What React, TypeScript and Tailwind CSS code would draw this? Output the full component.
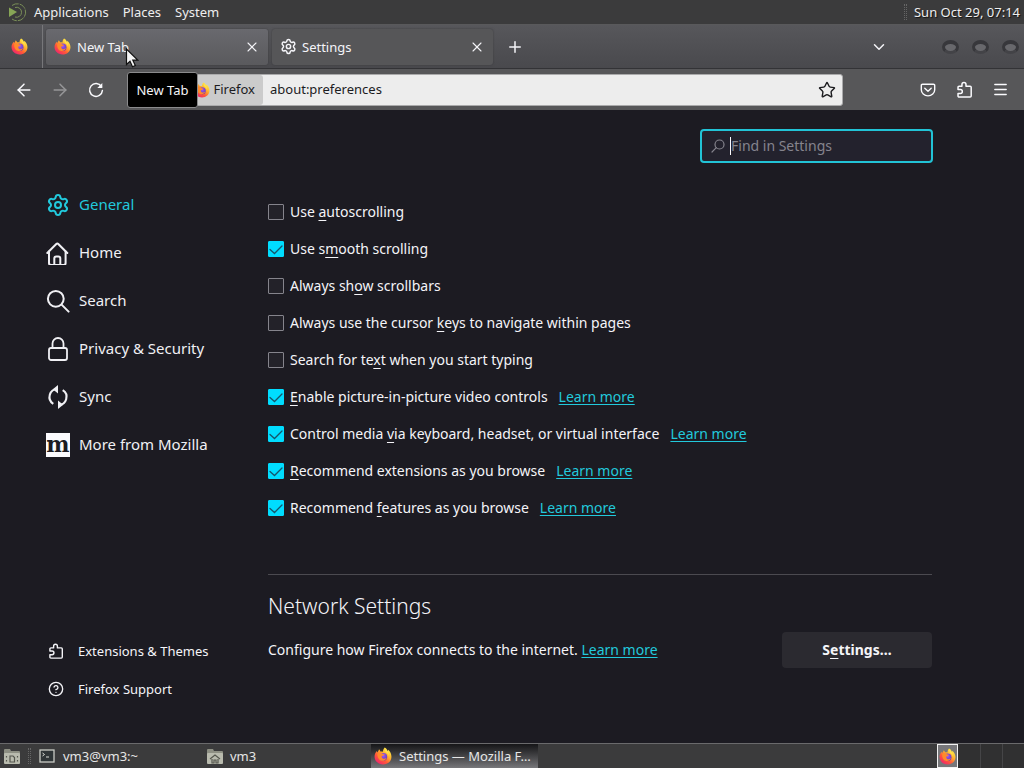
import { useState } from "react";
import type { ReactNode } from "react";
import {
  ArrowLeft,
  ArrowRight,
  ChevronDown,
  CircleHelp,
  Menu,
  Plus,
  Settings as Gear,
  Star,
  X,
} from "lucide-react";

function FirefoxLogo({ className, id }: { className: string; id: string }) {
  return (
    <svg viewBox="0 0 32 32" className={className} aria-hidden="true">
      <defs>
        <linearGradient id={id + "-body"} x1="0.85" y1="0.1" x2="0.2" y2="0.95">
          <stop offset="0" stopColor="#fff14a" />
          <stop offset="0.35" stopColor="#ffb02e" />
          <stop offset="0.65" stopColor="#ff5a36" />
          <stop offset="1" stopColor="#f0246e" />
        </linearGradient>
        <radialGradient id={id + "-core"} cx="0.5" cy="0.35" r="0.7">
          <stop offset="0" stopColor="#a05cf0" />
          <stop offset="1" stopColor="#5a33b8" />
        </radialGradient>
      </defs>
      <path
        fill={"url(#" + id + "-body)"}
        d="M19 1c3.500 2 4.500 4 5 6 1-.4 1.300-1 1.300-2 3.500 3.200 5.700 7.500 5.700 12.200C31 25.400 24.300 31 16 31S1 25 1 17c0-4 1.500-7.300 4-10 .2 1.200.5 2 1 2.600C7.500 7.500 8.500 5.500 9 4c1.300 1.200 2 2.700 2.300 4.200 1.700-.4 3.500-.2 4.700.4C16 5.500 17 3 19 1z"
      />
      <circle cx="16.500" cy="17.500" r="7" fill={"url(#" + id + "-core)"} />
      <path
        fill="#ff8a2b"
        d="M6 12c3-2.500 6.500-2.500 9-.2 1 .9 2.500 1 4 1-1 2.400-3.500 2.600-4.800 3.400-1.200.8-.7 3.300 1.300 4.300 2.500 1.200 5 .2 7-1.500-1.500 4.500-6 6.500-10.500 5C8 22.500 5.500 17 6 12z"
      />
      <path fill="#ffe14d" d="M20 3c3 4 7 6.500 6.500 14-.5-3.500-2.500-6-5-7.500C19.500 8 19 5.500 20 3z" />
    </svg>
  );
}

function PuzzleIcon({ className }: { className: string }) {
  return (
    <svg viewBox="0 0 16 16" className={className} fill="none" stroke="currentColor" strokeWidth="1.4" strokeLinejoin="round" aria-hidden="true">
      <path d="M1.900 8V5.900a1 1 0 0 1 1-1h2.700V3.200a1.900 1.900 0 0 1 3.800 0v1.700h3.900a1 1 0 0 1 1 1v8.200a1 1 0 0 1-1 1H2.900a1 1 0 0 1-1-1v-2.400h2.200a1.700 1.700 0 0 0 0-3.700z" />
    </svg>
  );
}

function PocketIcon() {
  return (
    <svg viewBox="0 0 16 16" className="size-4" fill="none" stroke="currentColor" strokeWidth="1.400" strokeLinecap="round" strokeLinejoin="round" aria-hidden="true">
      <path d="M2.500 2.200h11a1.200 1.200 0 0 1 1.200 1.200v4.300a6.700 6.200 0 0 1-13.400 0V3.400a1.200 1.200 0 0 1 1.200-1.200z" />
      <path d="M4.800 6.300 8 9.300l3.200-3" />
    </svg>
  );
}

function ReloadIcon() {
  return (
    <svg viewBox="0 0 16 16" className="size-4" fill="none" stroke="currentColor" strokeWidth="1.500" strokeLinecap="round" aria-hidden="true">
      <path d="M13.400 4.500A6.400 6.400 0 1 0 14.400 8.500" />
      <path d="M14.300 1v5H9.300z" fill="currentColor" stroke="none" />
    </svg>
  );
}

function HomeIcon() {
  return (
    <svg viewBox="0 0 24 24" className="size-6" fill="none" stroke="currentColor" strokeWidth="2" strokeLinecap="round" strokeLinejoin="round" aria-hidden="true">
      <path d="M1.300 12 10.300 3a1.400 1.400 0 0 1 2 0L21.300 12" />
      <path d="M3 10.500V22a2 2 0 0 0 2 2h12.600a2 2 0 0 0 2-2V10.500" />
      <path d="M8.300 24v-6.500a2 2 0 0 1 2-2h2a2 2 0 0 1 2 2V24" />
    </svg>
  );
}

function SearchIcon() {
  return (
    <svg viewBox="0 0 24 24" className="size-6" fill="none" stroke="currentColor" strokeWidth="2" strokeLinecap="round" aria-hidden="true">
      <circle cx="9.800" cy="9.800" r="7.900" />
      <path d="m15.600 15.600 7 7" />
    </svg>
  );
}

function LockIcon() {
  return (
    <svg viewBox="0 0 24 24" className="size-6" fill="none" stroke="currentColor" strokeWidth="1.800" aria-hidden="true">
      <rect x="3" y="11" width="18" height="12" rx="2" />
      <path d="M6.500 11V6.500a5.500 5.500 0 0 1 11 0V11" />
    </svg>
  );
}

function SyncIcon() {
  return (
    <svg viewBox="0 0 24 24" className="size-6" fill="none" stroke="currentColor" strokeWidth="2.100" aria-hidden="true">
      <path d="M7.300 18.800A8 8 0 0 1 11.500 4" />
      <path d="M16.700 5.200A8 8 0 0 1 12.500 20" />
      <path d="M12 0v8.400L6.800 4.200zM12 15.600V24l5.200-4.200z" fill="currentColor" stroke="none" />
    </svg>
  );
}

function FindIcon() {
  return (
    <svg viewBox="0 0 16 16" className="size-4" fill="none" stroke="currentColor" strokeWidth="1.200" strokeLinecap="round" aria-hidden="true">
      <circle cx="9.500" cy="6.500" r="4.500" />
      <path d="M6.300 9.700 2 14" />
    </svg>
  );
}

function FolderIcon({ home }: { home: boolean }) {
  return (
    <svg viewBox="0 0 18 18" className="size-[18px]" aria-hidden="true">
      <path d="M1 3a1 1 0 0 1 1-1h5l1 2h8a1 1 0 0 1 1 1v3H1z" fill="#8d8f83" />
      <rect x="1" y="6" width="16" height="11" rx="1" fill="#b9bbae" />
      {home ? (
        <path d="m4 12 5-4 5 4M6 12v4h2v-3h2v3h2v-4" fill="none" stroke="#55574e" strokeWidth="1.200" />
      ) : (
        <path d="M7 9h3l1.500 1.500V15H7zM3.500 9v1.500M3.500 13v1.500M14.500 9v1.500M14.500 13v1.500" fill="none" stroke="#55574e" strokeWidth="1.200" />
      )}
    </svg>
  );
}

function TerminalIcon() {
  return (
    <svg viewBox="0 0 16 14" className="h-[14px] w-4" aria-hidden="true">
      <rect x="1" y="1" width="14" height="12" fill="#2e3436" stroke="#c9cbc5" strokeWidth="1.300" />
      <path d="m3.500 4 2 1.500-2 1.500M7 8h3" fill="none" stroke="#d8dad4" />
    </svg>
  );
}

function MateLogo() {
  return (
    <svg viewBox="0 0 20 20" className="size-5" fill="none" aria-hidden="true">
      <path d="M2 5.500 10 10l-8 5z" fill="#87a556" />
      <path d="M5 3.500A8.500 8.500 0 1 1 5 17" stroke="#7a8f58" strokeDasharray="7 1" />
      <path d="M8 5.500a5 5 0 1 1 0 9.500" stroke="#7a8f58" />
    </svg>
  );
}

function AccessText({ before, letter, after }: { before: string; letter: string; after: string }) {
  return (
    <>
      {before}
      <span className="underline decoration-1 underline-offset-3">{letter}</span>
      {after}
    </>
  );
}

const options = [
  { id: "autoscroll", before: "Use ", letter: "a", after: "utoscrolling", on: false, more: false },
  { id: "smooth", before: "Use s", letter: "m", after: "ooth scrolling", on: true, more: false },
  { id: "scrollbars", before: "Always sh", letter: "o", after: "w scrollbars", on: false, more: false },
  { id: "cursor", before: "Always use the cursor ", letter: "k", after: "eys to navigate within pages", on: false, more: false },
  { id: "typing", before: "Search for te", letter: "x", after: "t when you start typing", on: false, more: false },
  { id: "pip", before: "", letter: "E", after: "nable picture-in-picture video controls", on: true, more: true },
  { id: "media", before: "Control media ", letter: "v", after: "ia keyboard, headset, or virtual interface", on: true, more: true },
  { id: "extensions", before: "", letter: "R", after: "ecommend extensions as you browse", on: true, more: true },
  { id: "features", before: "Recommend ", letter: "f", after: "eatures as you browse", on: true, more: true },
];

function LearnMore() {
  return (
    <a href="#learn-more" className="text-[#22c9dc] underline decoration-1 underline-offset-2">
      Learn more
    </a>
  );
}

function Option({ option }: { option: (typeof options)[number] }) {
  const [on, setOn] = useState(option.on);
  return (
    <div className="flex h-[37px] items-center gap-[11px]">
      <div className="flex items-center gap-[6px]">
        <span className="grid size-4">
          <input
            id={option.id}
            type="checkbox"
            checked={on}
            onChange={(e) => setOn(e.target.checked)}
            className="peer col-start-1 row-start-1 size-4 appearance-none rounded-[1px] border border-[#85848c] bg-[#232229] checked:border-[#00ddff] checked:bg-[#00ddff]"
          />
          <svg viewBox="0 0 16 16" className="pointer-events-none col-start-1 row-start-1 size-4 opacity-0 peer-checked:opacity-100" fill="none" stroke="#15556b" strokeWidth="1.300" strokeLinecap="round" aria-hidden="true">
            <path d="m2 8.500 4.500 4L14 5" />
          </svg>
        </span>
        <label htmlFor={option.id}>
          <AccessText before={option.before} letter={option.letter} after={option.after} />
        </label>
      </div>
      {option.more && <LearnMore />}
    </div>
  );
}

function NavItem({ icon, label, active = false }: { icon: ReactNode; label: string; active?: boolean }) {
  return (
    <a href={"#" + label.toLowerCase().split(" ")[0]} className={"flex h-12 items-center gap-[9px] text-[15px] " + (active ? "text-[#22c9dc]" : "text-[#f0f0f4]")}>
      {icon}
      {label}
    </a>
  );
}

function ToolButton({ label, children, dim = false }: { label: string; children: ReactNode; dim?: boolean }) {
  return (
    <button type="button" aria-label={label} disabled={dim} className={"flex h-8 w-9 items-center justify-center " + (dim ? "text-[#969698]" : "text-[#fbfbfe]")}>
      {children}
    </button>
  );
}

function WindowButton({ label }: { label: string }) {
  return (
    <button type="button" aria-label={label} className="h-[14px] w-[17px] rounded-[50%] border-[3px] border-t-4 border-[#37373b] border-b-[#434347] bg-[#68686c]" />
  );
}

export default function App() {
  return (
    <div className="relative flex min-h-screen flex-col bg-[#1c1b22] font-['Noto_Sans',sans-serif] text-sm text-[#f4f4f8]">
      <header className="flex h-6 items-center bg-[#3b3b3c] pr-1 pl-[7px] text-[13px] text-[#eeeeee] [text-shadow:1px_1px_1px_#111]">
        <MateLogo />
        <nav className="flex gap-[14px] pl-[7px]">
          <button type="button">Applications</button>
          <button type="button">Places</button>
          <button type="button">System</button>
        </nav>
        <div className="ml-auto flex items-center gap-[7px]">
          <span className="h-4 w-[3px] border-x border-dotted border-[#666]" />
          <time>Sun Oct 29, 07:14</time>
        </div>
      </header>

      <div className="flex h-[45px] items-center border-t border-b border-t-[#59595b] border-b-[#333336] bg-linear-to-b from-[#57575b] to-[#49494d] text-[13px]">
        <button type="button" aria-label="Firefox View" className="flex h-full w-[43px] items-center justify-center border-r border-[#77777a] pr-[3px]">
          <FirefoxLogo className="size-[17px]" id="view" />
        </button>
        <div role="tablist" className="flex gap-[4px] pl-[3px]">
          <div className="flex h-9 w-[222px] items-center rounded-[3px] bg-linear-to-b from-[#69696e] to-[#5a5a5d] px-2 shadow-[0_0_2px_#39393c]">
            <FirefoxLogo className="size-[17px]" id="tab" />
            <button type="button" role="tab" aria-selected="true" className="flex-1 pt-px pl-[6px] text-left">New Tab</button>
            <button type="button" aria-label="Close New Tab"><X className="size-4" strokeWidth={1.6} /></button>
          </div>
          <div className="flex h-9 w-[221px] items-center rounded-[3px] bg-[#565658] px-2 shadow-[0_0_2px_#39393c]">
            <Gear className="size-[17px]" strokeWidth={2.1} />
            <button type="button" role="tab" aria-selected="false" className="flex-1 pt-px pl-[5px] text-left">Settings</button>
            <button type="button" aria-label="Close Settings"><X className="size-4" strokeWidth={1.6} /></button>
          </div>
        </div>
        <button type="button" aria-label="Open a new tab" className="ml-[13px]"><Plus className="size-[18px]" strokeWidth={2} /></button>
        <button type="button" aria-label="List all tabs" className="mr-[54px] ml-auto"><ChevronDown className="size-[18px]" strokeWidth={2} /></button>
        <div className="flex gap-[13px] pr-[5px]">
          <WindowButton label="Minimize" />
          <WindowButton label="Maximize" />
          <WindowButton label="Close window" />
        </div>
      </div>

      <div className="flex h-[41px] items-center bg-[#575759] px-[6px] text-[13px]">
        <ToolButton label="Back"><ArrowLeft className="size-[20px]" strokeWidth={1.8} /></ToolButton>
        <ToolButton label="Forward" dim><ArrowRight className="size-[20px]" strokeWidth={1.8} /></ToolButton>
        <ToolButton label="Reload"><ReloadIcon /></ToolButton>
        <div className="mr-[67px] ml-[15px] flex h-8 flex-1 items-center overflow-hidden rounded-[3px] border border-[#aaaaab] bg-[#ededed] text-[#1c1c1f]">
          <div className="flex h-full w-[133px] items-center justify-end gap-[4px] rounded-r-[3px] bg-[#cbcbcb] pr-2">
            <FirefoxLogo className="size-4" id="identity" />
            Firefox
          </div>
          <input aria-label="Address" defaultValue="about:preferences" className="min-w-0 flex-1 bg-transparent pl-[7px] outline-none" />
          <button type="button" aria-label="Bookmark this page" className="px-[6px]"><Star className="size-[18px]" strokeWidth={1.9} /></button>
        </div>
        <ToolButton label="Save to Pocket"><PocketIcon /></ToolButton>
        <ToolButton label="Extensions"><PuzzleIcon className="size-[17px]" /></ToolButton>
        <ToolButton label="Menu"><Menu className="size-[17px]" strokeWidth={2} /></ToolButton>
      </div>

      <div className="flex flex-1">
        <aside className="flex w-[268px] shrink-0 flex-col justify-between pt-[71px] pb-[35px] pl-[46px]">
          <nav>
            <NavItem active label="General" icon={<Gear className="size-6" strokeWidth={2} />} />
            <NavItem label="Home" icon={<HomeIcon />} />
            <NavItem label="Search" icon={<SearchIcon />} />
            <NavItem label="Privacy & Security" icon={<LockIcon />} />
            <NavItem label="Sync" icon={<SyncIcon />} />
            <NavItem
              label="More from Mozilla"
              icon={<span aria-hidden="true" className="flex size-6 items-center justify-center bg-[#fbfbfe] pb-[3px] font-['DejaVu_Serif',serif] text-[22px] leading-none font-bold text-[#1c1b22]">m</span>}
            />
          </nav>
          <nav className="text-[13px]">
            <a href="#addons" className="flex h-[38px] items-center gap-[14px] pl-[2px]"><PuzzleIcon className="size-4" />Extensions &amp; Themes</a>
            <a href="#support" className="flex h-[38px] items-center gap-[14px] pl-[2px]"><CircleHelp className="size-4" strokeWidth={2} />Firefox Support</a>
          </nav>
        </aside>

        <main className="max-w-[665px] flex-1 pt-[19px]">
          <div className="ml-auto flex h-[34px] w-[233px] items-center rounded-[4px] border-2 border-[#22c3d6] bg-[#23222d] pl-2 text-[#85848d]">
            <FindIcon />
            <span className="ml-[4px] h-[18px] w-px bg-[#fbfbfe]" />
            <input aria-label="Find in Settings" placeholder="Find in Settings" className="min-w-0 flex-1 bg-transparent text-[#fbfbfe] outline-none placeholder:text-[#85848d]" />
          </div>

          <section className="pt-[30px]">
            {options.map((option) => (
              <Option key={option.id} option={option} />
            ))}
          </section>

          <section className="mt-[48px] mr-px border-t border-[#4b4a50] pt-[15px]">
            <h2 className="text-[21px] leading-8 font-light">Network Settings</h2>
            <div className="mt-[10px] flex items-center justify-between">
              <p>Configure how Firefox connects to the internet. <LearnMore /></p>
              <button type="button" className="h-9 w-[150px] rounded-[4px] bg-[#2b2a30] font-bold">
                <AccessText before="S" letter="e" after="ttings…" />
              </button>
            </div>
          </section>
        </main>
      </div>

      <footer className="flex h-[25px] items-center border-t border-[#6a6a6c] bg-[#3b3b3c] pl-[3px] text-[13px] text-[#e6e6e6] [text-shadow:1px_1px_1px_#111]">
        <button type="button" aria-label="Show desktop"><FolderIcon home={false} /></button>
        <span className="mr-[8px] ml-[7px] h-4 w-[3px] border-x border-dotted border-[#666]" />
        <button type="button" className="flex h-full w-[167px] items-center gap-2"><TerminalIcon />vm3@vm3:~</button>
        <button type="button" className="flex h-full w-[165px] items-center gap-[6px]"><FolderIcon home />vm3</button>
        <button type="button" className="flex h-full w-[167px] items-center gap-[7px] bg-linear-to-b from-[#161618] to-[#77777a] pl-[3px] whitespace-nowrap">
          <FirefoxLogo className="size-[18px] shrink-0" id="task" />
          Settings — Mozilla F…
        </button>
        <div className="ml-auto flex h-full w-[87px] bg-[#303031]">
          <button type="button" aria-label="Workspace 1" className="flex h-full w-[21px] items-center justify-center border border-[#f2f2f2] bg-[#77777a]"><FirefoxLogo className="size-[17px]" id="workspace" /></button>
          <button type="button" aria-label="Workspace 2" className="w-[23px] border-r border-[#454547]" />
          <button type="button" aria-label="Workspace 3" className="w-[22px] border-r border-[#454547]" />
          <button type="button" aria-label="Workspace 4" className="w-[21px]" />
        </div>
      </footer>

      <div role="tooltip" className="absolute top-[72px] left-[127px] flex h-9 w-[71px] items-center justify-center rounded-[3px] border border-[#8b8b8d] bg-black text-[13px]">New Tab</div>
      <svg viewBox="0 0 14 20" className="absolute top-[48px] left-[125px] h-5 w-[14px]" aria-hidden="true">
        <path d="M1.500 1v15.500l3.500-3.300 2.500 5.600 2.800-1.300-2.500-5.400h4.900z" fill="#f5f5f5" stroke="#111" strokeWidth="1.200" />
      </svg>
    </div>
  );
}
